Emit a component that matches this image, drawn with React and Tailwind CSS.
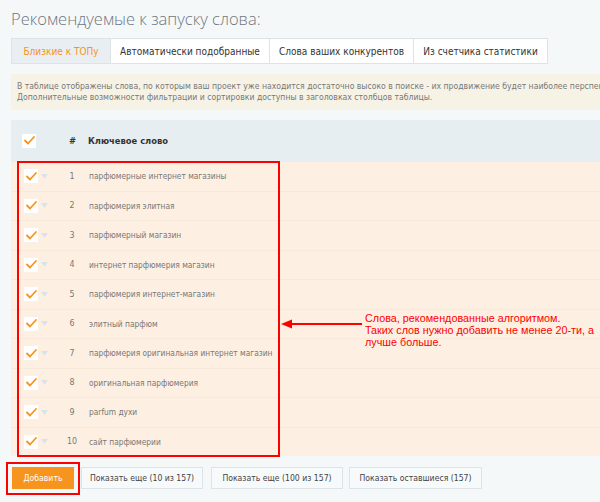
const tabs = [
  { label: "Близкие к ТОПу", w: "w-[98px]" },
  { label: "Автоматически подобранные", w: "w-[159px]" },
  { label: "Слова ваших конкурентов", w: "w-[144px]" },
  { label: "Из счетчика статистики", w: "w-[134px]" },
]

const keywords = [
  "парфюмерные интернет магазины",
  "парфюмерия элитная",
  "парфюмерный магазин",
  "интернет парфюмерия магазин",
  "парфюмерия интернет-магазин",
  "элитный парфюм",
  "парфюмерия оригинальная интернет магазин",
  "оригинальная парфюмерия",
  "parfum духи",
  "сайт парфюмерии",
]

function Check() {
  return (
    <span className="flex h-[14px] w-[14px] items-center justify-center bg-white">
      <svg width="11" height="9" viewBox="0 0 11 9" fill="none">
        <path d="M1 4.5 L4 7.5 L10 1" stroke="#f7941d" strokeWidth="1.8" strokeLinecap="round" strokeLinejoin="round" />
      </svg>
    </span>
  )
}

export default function App() {
  return (
    <div className="relative h-[502px] w-[600px] overflow-hidden whitespace-nowrap bg-[#f5f8f9] font-['DejaVu_Sans_Condensed','DejaVu_Sans',sans-serif]">
      <h1 className="pl-[11px] pt-[7px] font-['Open_Sans',sans-serif] text-[16.5px] font-light leading-[24px] text-[#6d7780]">
        Рекомендуемые к запуску слова:
      </h1>

      {/* tabs */}
      <div className="ml-[11px] mt-[7px] flex h-[26px] w-max border border-[#dde4e7] text-[10px] text-[#333]">
        {tabs.map((t, i) => (
          <div
            key={t.label}
            className={`flex items-center justify-center ${t.w} ${i > 0 ? "border-l border-[#dde4e7] bg-white" : "bg-[#e8eef1] text-[#f7941d]"}`}
          >
            {t.label}
          </div>
        ))}
      </div>

      {/* notice */}
      <div className="ml-[11px] mt-[10px] w-[700px] bg-[#f6f3e6] px-[6px] py-[7px] text-[8.6px] leading-[11px] text-[#777]">
        <p>
          В таблице отображены слова, по которым ваш проект уже находится достаточно высоко в поиске - их продвижение будет наиболее перспективным.
        </p>
        <p>Дополнительные возможности фильтрации и сортировки доступны в заголовках столбцов таблицы.</p>
      </div>

      {/* table */}
      <div className="ml-[11px] mt-[10px] w-[700px]">
        <div className="flex h-[41px] items-center bg-[#e6eef1] text-[9.3px] font-bold text-[#333]">
          <span className="ml-[11px]"><Check /></span>
          <span className="ml-[33px] w-[8px]">#</span>
          <span className="ml-[11px]">Ключевое слово</span>
        </div>
        {keywords.map((k, i) => (
          <div key={k} className="flex h-[29.5px] items-center border-t border-[#f6e9da] bg-[#fdf0e2] text-[8.3px] text-[#777]">
            <span className="ml-[13px]"><Check /></span>
            <svg className="ml-[3px]" width="7" height="5" viewBox="0 0 7 5">
              <path d="M0 0 H7 L3.5 5 Z" fill="#dbe3e8" />
            </svg>
            <span className="ml-[14px] w-[20px] text-center text-[8.8px]">{i + 1}</span>
            <span className="ml-[7px]">{k}</span>
          </div>
        ))}
      </div>

      {/* buttons */}
      <div className="ml-[12px] mt-[11px] flex text-[8.6px]">
        <button className="h-[22px] w-[62px] bg-[#f7941d] text-white">Добавить</button>
        <button className="ml-[7px] h-[22px] w-[122px] border border-[#dde3e6] bg-[#f7fafb] text-[#444]">Показать еще (10 из 157)</button>
        <button className="ml-[8px] h-[22px] w-[132px] border border-[#dde3e6] bg-[#f7fafb] text-[#444]">Показать еще (100 из 157)</button>
        <button className="ml-[6px] h-[22px] w-[133px] border border-[#dde3e6] bg-[#f7fafb] text-[#444]">Показать оставшиеся (157)</button>
      </div>

      {/* annotation */}
      <div className="pointer-events-none absolute left-[17px] top-[161px] h-[296px] w-[263px] border-2 border-[#ff0000]" />
      <div className="pointer-events-none absolute left-[6px] top-[462px] h-[33px] w-[74px] border-2 border-[#ff0000]" />
      <svg className="absolute left-[280px] top-[318px]" width="82" height="12" viewBox="0 0 82 12">
        <path d="M82 6 H10" stroke="#ff0000" strokeWidth="2" />
        <path d="M1 6 L12 1.5 L12 10.5 Z" fill="#ff0000" />
      </svg>
      <p className="absolute left-[365px] top-[312px] font-['Liberation_Sans',sans-serif] text-[10.8px] leading-[12px] text-[#ff0000]">
        Слова, рекомендованные алгоритмом.<br />
        Таких слов нужно добавить не менее 20-ти, а<br />
        лучше больше.
      </p>
    </div>
  )
}
